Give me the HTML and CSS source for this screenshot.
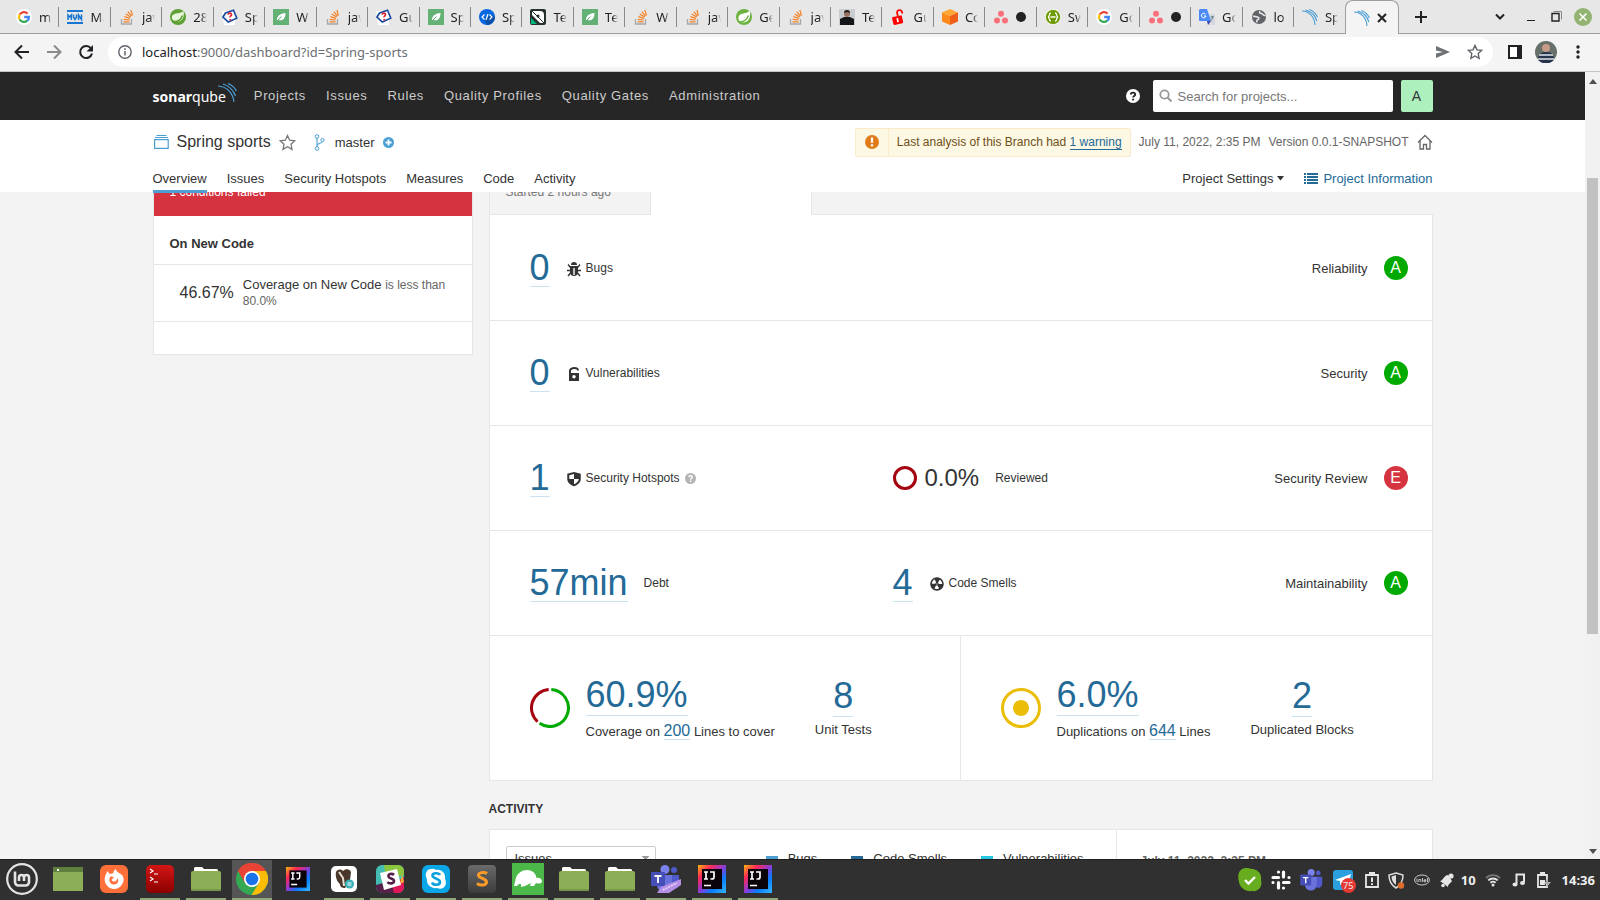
FILE: index.html
```html
<!DOCTYPE html>
<html lang="en">
<head>
<meta charset="utf-8">
<title>Spring sports</title>
<link rel="stylesheet" href="styles.css">
</head>
<body>
<svg class="defs" aria-hidden="true">
  <defs>
    <linearGradient id="g-ij" x1="0" y1="0" x2="1" y2="1"><stop offset="0" stop-color="#fdb60d"/><stop offset=".25" stop-color="#fe2857"/><stop offset=".5" stop-color="#8a3bd8"/><stop offset=".7" stop-color="#087cfa"/><stop offset="1" stop-color="#35b6ff"/></linearGradient>
    <linearGradient id="g-red" x1="0" y1="0" x2="0" y2="1"><stop offset="0" stop-color="#d31616"/><stop offset="1" stop-color="#8c0000"/></linearGradient>
    <linearGradient id="g-gray" x1="0" y1="0" x2="0" y2="1"><stop offset="0" stop-color="#6a6a6a"/><stop offset="1" stop-color="#3c3c3c"/></linearGradient>
  </defs>
  <symbol id="google" viewBox="0 0 16 16"><circle cx="8" cy="8" r="8" fill="#fff"/><g fill="none" stroke-width="2.3"><path d="M11.6 4.6A5 5 0 0 0 3.7 5.5" stroke="#ea4335"/><path d="M3.7 5.5a5 5 0 0 0 0 5" stroke="#fbbc05"/><path d="M3.7 10.5a5 5 0 0 0 7.6 1.2" stroke="#34a853"/><path d="M11.3 11.7A5 5 0 0 0 13 8H8.2" stroke="#4285f4"/></g></symbol>
  <symbol id="mvn" viewBox="0 0 16 16"><path d="M0 1h16v2H0zM0 13h16v2H0z" fill="#1976d2"/><path d="M1 11V6l1.700 2 1.700-2V11M6.500 5.500V8l1.500 2.500L9.500 8V5.500M11.500 11V6l3 4.500V5.500" fill="none" stroke="#1976d2" stroke-width="1.500"/></symbol>
  <symbol id="so" viewBox="0 0 16 16"><path d="M2.500 10v5h10v-5" fill="none" stroke="#a5a7aa" stroke-width="1.300"/><path d="M4.500 12.800h6M4.700 10.300l6 .7M5.400 7.600l5.600 1.800M6.700 4.900l5 3.200M8.800 2.600l3.700 4.500M11.800 1l1.700 5.500" stroke="#f48024" stroke-width="1.200"/></symbol>
  <symbol id="spring" viewBox="0 0 16 16"><circle cx="8" cy="8" r="8" fill="#6cb33e"/><path d="M13.800 1.800C10 5.500 2.200 3.200 2.400 9.500c.2 3.500 4 4.500 7 3.600 4.200-1.200 5.400-5.900 4.400-11.300z" fill="#fff"/><path d="M2.500 13.200c4 0 8.300-2 10-6.700" fill="none" stroke="#6cb33e" stroke-width="1.400"/></symbol>
  <symbol id="springdark" viewBox="0 0 16 16"><circle cx="8" cy="8" r="8" fill="#5fa134"/><path d="M13.500 2C10 5.500 1 3 2 9.300c.5 3.500 5 3.700 7.600 2.900C13 11 14.500 7 13.500 2z" fill="#e8f5df"/><path d="M2 12.500c5 .5 9-1.500 10.500-6" fill="none" stroke="#5fa134" stroke-width="1.500"/></symbol>
  <symbol id="jq" viewBox="0 0 16 16"><path d="M0 2h13v14H2z" fill="#fff"/><path d="M3.500 4l8-2.800 3.300 8-8.500 3.800L1 8z" fill="#fff" stroke="#17479e" stroke-width="1.600"/><path d="M6 5.600c.5-2 3.700-1.800 3.500.1-.1 1.300-1.600 1.200-1.500 2.700M8.200 10v1.400" stroke="#e32636" stroke-width="1.700" fill="none"/></symbol>
  <symbol id="bael" viewBox="0 0 16 16"><path d="M0 0h16v16H0z" fill="#63b175"/><path d="M4 12C3.500 7 7 4.500 12.500 4 12.500 9 10 12.500 5.500 11l3.300-3.500" fill="#fff"/><path d="M4 12l4.500-4.500" stroke="#63b175"/></symbol>
  <symbol id="code" viewBox="0 0 16 16"><circle cx="8" cy="8" r="8" fill="#0868e0"/><path d="M8 16a8 8 0 0 0 8-8l-3-2-8 4z" fill="#074fa8"/><path d="M5.500 5.500L3 8l2.500 2.500M10.500 5.500L13 8l-2.500 2.500M9 5L7 11" fill="none" stroke="#fff" stroke-width="1.200"/></symbol>
  <symbol id="tool" viewBox="0 0 16 16"><rect width="16" height="16" rx="2" fill="#25302f"/><path d="M2 2h8a4 4 0 0 1 4 4v8h-4L2 6z" fill="#fff"/><path d="M1 9l6 6H1z" fill="#00b980"/><path d="M2 2l12 12" stroke="#25302f"/><circle cx="8" cy="7" r="1.500" fill="#25302f"/></symbol>
  <symbol id="man" viewBox="0 0 16 16"><path d="M0 0h16v16H0z" fill="#c9cdd2"/><path d="M1 16V10l4-2h6l4 2v6z" fill="#15161a"/><circle cx="8" cy="5" r="3" fill="#9a7260"/><path d="M5 4a3 3 0 0 1 6 0l-3-1z" fill="#241a17"/></symbol>
  <symbol id="redlock" viewBox="0 0 16 16"><g transform="rotate(-12 8 8)"><rect x="2" y="7" width="10" height="8" rx="1" fill="#f00"/><path d="M8 7V4a2.500 2.500 0 0 1 5 0v1.500" fill="none" stroke="#f00" stroke-width="1.800"/><path d="M7 9v4" stroke="#fff" stroke-width="1.800"/></g></symbol>
  <symbol id="cube" viewBox="0 0 16 16"><path d="M8 0l8 3.500L8 7 0 3.500z" fill="#ffa733"/><path d="M0 3.500L8 7v9l-8-3.500z" fill="#ff8a1c"/><path d="M16 3.500L8 7v9l8-3.500z" fill="#ef5f17"/></symbol>
  <symbol id="asana" viewBox="0 0 16 16"><g fill="#f9707b"><circle cx="8" cy="4.800" r="3"/><circle cx="4" cy="11.500" r="3"/><circle cx="12" cy="11.500" r="3"/></g></symbol>
  <symbol id="swagger" viewBox="0 0 16 16"><circle cx="8" cy="8" r="7.600" fill="#6d9a00" stroke="#fff" stroke-width=".8"/><path d="M6 4c-3 0-.5 3.500-3 4 2.500.500 0 4 3 4M10 4c3 0 .5 3.500 3 4-2.500.500 0 4-3 4M5.500 8h5" fill="none" stroke="#fff" stroke-width="1.300"/></symbol>
  <symbol id="gtrans" viewBox="0 0 16 16"><path d="M7 5h9v11H9z" fill="#d5d8dc"/><path d="M8 12h4l-3 4z" fill="#3a45b5"/><path d="M1 0h7l4 12H1a1 1 0 0 1-1-1V1z" fill="#4c8bf5"/><path d="M6.600 5.200A2.300 2.300 0 1 0 7 7H5" fill="none" stroke="#fff" stroke-width="1"/><path d="M11.500 8H15M13.500 7c0 3-1 4-2 5" stroke="#607d8b" fill="none"/></symbol>
  <symbol id="globe" viewBox="0 0 16 16"><circle cx="8" cy="8" r="7" fill="#5f6368"/><path d="M2 7.500c2-.5 3 .3 5 .8 1.500.500 1 2-.5 2.500-.8.500-.5 1.500-1 2.500M9 2c-1 2 0 2.500 1.500 2.500s1.500 2.500 4 2" fill="none" stroke="#e8e8e8" stroke-width="1.600"/></symbol>
  <symbol id="waves" viewBox="0 0 16 16"><path d="M0 2c7 .2 12.500 5.500 13 14M3.500 1C9.500 2.500 13.500 6.500 14.800 12M7.500.5C11 2 14 4.500 15.500 8" fill="none" stroke="#4b9fd5" stroke-width="1.100"/></symbol>
  <symbol id="folder" viewBox="0 0 30 26"><path d="M3 5V2l1-1h7l2 2h13l1 1v3z" fill="#fff"/><rect y="5" width="30" height="20" rx="2" fill="#8cae57"/><path d="M0 23h30v1a1 1 0 0 1-1 1H1a1 1 0 0 1-1-1z" fill="#76964a"/></symbol>
  <symbol id="idea" viewBox="0 0 28 28"><path d="M0 0h28v28H0z" fill="url(#g-ij)"/><path d="M4 4h20v20H4z" fill="#090309"/><path d="M6 20.500h7M6 7h4M8 7v7M6 14h4M12 7h4v5c0 1.500-.5 2-2 2h-1.500" fill="none" stroke="#fff" stroke-width="1.700"/></symbol>
  <symbol id="teams" viewBox="0 0 30 28"><circle cx="23" cy="5" r="3" fill="#5059c9"/><circle cx="14" cy="4.500" r="4.500" fill="#7b83eb"/><path d="M18 10h10v9a5 5 0 0 1-8 4z" fill="#5059c9"/><path d="M6 10h15v10a7 7 0 0 1-15 0z" fill="#6a72dc"/><rect y="7" width="14" height="14" rx="1" fill="#464eb8"/><path d="M3.500 11h7M7 11v7" stroke="#fff" stroke-width="1.800"/></symbol>
  <symbol id="slack" viewBox="0 0 20 20"><g stroke="#fff" stroke-width="3.200" stroke-linecap="round"><path d="M7.500 2v0M12.500 2v5M2 7.500h5.500M18 7.500h0M2 12.500h0M12.500 12.500H18M7.500 12.500V18M12.500 18v0"/></g></symbol>
</svg>

<div class="browser">
  <header class="chrome">
    <div class="strip">
      <div class="tabs">
        <button class="tab"><svg><use href="#google"/></svg><span>ma</span></button>
        <button class="tab"><svg><use href="#mvn"/></svg><span>Ma</span></button>
        <button class="tab"><svg><use href="#so"/></svg><span>jav</span></button>
        <button class="tab"><svg><use href="#springdark"/></svg><span>28</span></button>
        <button class="tab"><svg><use href="#jq"/></svg><span>Sp</span></button>
        <button class="tab"><svg><use href="#bael"/></svg><span>W</span></button>
        <button class="tab"><svg><use href="#so"/></svg><span>jav</span></button>
        <button class="tab"><svg><use href="#jq"/></svg><span>Gu</span></button>
        <button class="tab"><svg><use href="#bael"/></svg><span>Sp</span></button>
        <button class="tab"><svg><use href="#code"/></svg><span>Sp</span></button>
        <button class="tab"><svg><use href="#tool"/></svg><span>Te</span></button>
        <button class="tab"><svg><use href="#bael"/></svg><span>Te</span></button>
        <button class="tab"><svg><use href="#so"/></svg><span>W</span></button>
        <button class="tab"><svg><use href="#so"/></svg><span>jav</span></button>
        <button class="tab"><svg><use href="#spring"/></svg><span>Ge</span></button>
        <button class="tab"><svg><use href="#so"/></svg><span>jav</span></button>
        <button class="tab"><svg><use href="#man"/></svg><span>Te</span></button>
        <button class="tab"><svg><use href="#redlock"/></svg><span>Gu</span></button>
        <button class="tab"><svg><use href="#cube"/></svg><span>Co</span></button>
        <button class="tab"><svg><use href="#asana"/></svg><i class="dot"></i></button>
        <button class="tab"><svg><use href="#swagger"/></svg><span>Sw</span></button>
        <button class="tab"><svg><use href="#google"/></svg><span>Go</span></button>
        <button class="tab"><svg><use href="#asana"/></svg><i class="dot"></i></button>
        <button class="tab"><svg><use href="#gtrans"/></svg><span>Go</span></button>
        <button class="tab"><svg><use href="#globe"/></svg><span>lo</span></button>
        <button class="tab last"><svg><use href="#waves"/></svg><span>Sp</span></button>
        <button class="tab active" aria-label="Close tab"><svg><use href="#waves"/></svg><svg viewBox="0 0 16 16"><path d="M1 4l8 8M9 4l-8 8" stroke="#222" stroke-width="2"/></svg></button>
      </div>
      <div class="window-tools">
        <button class="plus" aria-label="New tab"><svg width="12" height="12"><path d="M6 0v12M0 6h12" stroke="#222" stroke-width="2"/></svg></button>
        <button class="search-tabs" aria-label="Search tabs"><svg width="10" height="8"><path d="M1 1.500l4 4 4-4" fill="none" stroke="#222" stroke-width="2"/></svg></button>
        <button class="minimize" aria-label="Minimize"><svg width="8" height="10"><path d="M0 8.500h8" stroke="#222"/></svg></button>
        <button aria-label="Restore"><svg width="11" height="11"><path d="M2.500.5h8v8" fill="none" stroke="#888"/><path d="M1 2.500h7v7.500H1z" fill="none" stroke="#222" stroke-width="1.400"/></svg></button>
        <button aria-label="Close"><svg width="18" height="18"><circle cx="9" cy="9" r="9" fill="#92b372"/><path d="M5.500 5.500l7 7M12.500 5.500l-7 7" stroke="#fff" stroke-width="1.600"/></svg></button>
      </div>
    </div>
    <div class="toolbar">
      <button aria-label="Back"><svg width="16" height="16"><path d="M15 8H2M8 1.500L1.500 8 8 14.500" fill="none" stroke="#202124" stroke-width="2"/></svg></button>
      <button aria-label="Forward"><svg width="16" height="16"><path d="M1 8h13M8 1.500L14.500 8 8 14.500" fill="none" stroke="#8a8a8a" stroke-width="2"/></svg></button>
      <button aria-label="Reload"><svg width="16" height="16"><path d="M13 4.500A6 6 0 1 0 14 9.500" fill="none" stroke="#202124" stroke-width="2"/><path d="M15 1v6.500H8.500z" fill="#202124"/></svg></button>
      <div class="omnibox">
        <svg width="14" height="14"><circle cx="7" cy="7" r="6.200" fill="none" stroke="#5f6368" stroke-width="1.400"/><path d="M7 6v4.500M7 3.300v1.600" stroke="#5f6368" stroke-width="1.500"/></svg>
        <p class="url"><b>localhost</b>:9000/dashboard?id=Spring-sports</p>
        <svg width="16" height="14"><path d="M1 1l14 6-14 6V8.500L8 7 1 5.500z" fill="#6e7175"/></svg>
        <svg width="16" height="16"><path d="M8 1.500l2 4.400 4.600.5-3.400 3.200.9 4.700L8 12l-4.100 2.300.9-4.700L1.400 6.400 6 5.900z" fill="none" stroke="#5f6368" stroke-width="1.400"/></svg>
      </div>
      <button aria-label="Side panel"><svg width="14" height="14"><path d="M1 1h12v12H1z" fill="#fff" stroke="#202124" stroke-width="2"/><path d="M9 0h5v14H9z" fill="#202124"/></svg></button>
      <button class="profile" aria-label="Profile"><svg width="22" height="22"><circle cx="11" cy="11" r="11" fill="#68706a"/><path d="M3 19c0-6 3-8 8-8s8 2 8 8a11 11 0 0 1-16 0z" fill="#27344c"/><path d="M4 14h14M3 18h16" stroke="#dfe3ea" stroke-width="1.400"/><circle cx="11" cy="7" r="4" fill="#c69a86"/></svg></button>
      <button aria-label="Menu"><svg width="4" height="14" fill="#202124"><circle cx="2" cy="2" r="1.700"/><circle cx="2" cy="7" r="1.700"/><circle cx="2" cy="12" r="1.700"/></svg></button>
    </div>
  </header>

  <div class="view">
    <div class="page">
      <div class="topbar">
        <div class="wrap">
          <a class="logo" href="#"><b>sonar</b><span>qube</span><svg width="19" height="20" viewBox="0 0 19 20"><path d="M0 3c9 .5 15 7 16 16M5 1C11 3 15.500 7.500 17.500 13M10 .5C14 2 16.500 4.500 18.500 8" fill="none" stroke="#4b9fd5" stroke-width="1.200"/></svg></a>
          <nav class="mainnav"><a href="#">Projects</a><a href="#">Issues</a><a href="#">Rules</a><a href="#">Quality Profiles</a><a href="#">Quality Gates</a><a href="#">Administration</a></nav>
          <button class="help" aria-label="Help"><svg width="14" height="14"><circle cx="7" cy="7" r="7" fill="#fff"/><path d="M4.800 5.500C4.900 3 9.200 3 9.200 5.400 9.200 7 7.100 6.900 7.100 8.600M7.100 9.700v1.900" fill="none" stroke="#262626" stroke-width="1.900"/></svg></button>
          <label class="search"><svg width="14" height="14"><circle cx="5.500" cy="5.500" r="4.200" fill="none" stroke="#999" stroke-width="1.800"/><path d="M8.500 8.500l4 4" stroke="#999" stroke-width="2"/></svg><input type="text" placeholder="Search for projects..." aria-label="Search for projects"></label>
          <button class="user">A</button>
        </div>
      </div>

      <div class="project">
        <div class="wrap">
          <div class="projectline">
            <svg width="16" height="14"><path d="M1.600 4.700h13.600v8.600H1.600zM2 2.500h13M3.500.5h10" fill="none" stroke="#4b9fd5" stroke-width="1.200"/></svg>
            <h1>Spring sports</h1>
            <svg width="17" height="17"><path d="M8.500 1.500l2.200 4.700 5 .6-3.700 3.500 1 5.100-4.500-2.600L4 15.400l1-5.100L1.300 6.800l5-.6z" fill="none" stroke="#777" stroke-width="1.300"/></svg>
            <svg class="branch" width="11" height="17"><path d="M3 3.500v10M3 11.500C4 8.500 8 10 8.500 7.500" fill="none" stroke="#4b9fd5" stroke-width="1.100"/><g fill="#fff" stroke="#4b9fd5"><circle cx="3" cy="2.500" r="1.800"/><circle cx="3" cy="14.500" r="1.800"/><circle cx="8.500" cy="6" r="1.600"/></g></svg>
            <span class="master">master</span>
            <svg width="11" height="11"><circle cx="5.500" cy="5.500" r="5.500" fill="#4b9fd5"/><path d="M5.500 2.500v6M2.500 5.500h6" stroke="#fff" stroke-width="1.800"/></svg>
            <div class="alert">
              <span class="alerticon"><svg width="14" height="14"><circle cx="7" cy="7" r="7" fill="#e07b17"/><path d="M7 2.500v5.300M7 9.200v2.200" stroke="#fff" stroke-width="2.200"/></svg></span>
              <p>Last analysis of this Branch had <a href="#">1 warning</a></p>
            </div>
            <span class="meta">July 11, 2022, 2:35 PM</span>
            <span class="meta">Version 0.0.1-SNAPSHOT</span>
            <svg class="home" width="16" height="16"><path d="M1 8.500l7-7 7 7M3 7v8h3.500v-4.500h3V15H13V7" fill="none" stroke="#666" stroke-width="1.300"/></svg>
          </div>
          <div class="projectnav">
            <a class="on" href="#">Overview</a><a href="#">Issues</a><a href="#">Security Hotspots</a><a href="#">Measures</a><a href="#">Code</a><a href="#">Activity</a>
            <button class="settings">Project Settings<svg width="7" height="5"><path d="M0 0h7L3.500 4.500z" fill="#333"/></svg></button>
            <a class="info" href="#"><svg width="14" height="11"><path d="M0 1h2M3 1h11M0 4h2M3 4h11M0 7h2M3 7h11M0 10h2M3 10h11" stroke="#236a97" stroke-width="2"/></svg>Project Information</a>
          </div>
        </div>
      </div>

      <main class="content">
        <div class="wrap columns">
          <aside class="gate">
            <div class="failed">1 conditions failed</div>
            <h2>On New Code</h2>
            <div class="condition"><span class="value">46.67%</span><p>Coverage on New Code <small>is less than 80.0%</small></p></div>
            <div class="blank"></div>
          </aside>
          <section class="overview">
            <div class="periods"><button>Started 2 hours ago</button><button class="on" aria-label="Overall Code"></button></div>
            <div class="panel">
              <div class="row">
                <div class="cell"><a class="big" href="#">0</a><svg class="ic" viewBox="0 0 18 18"><path d="M6 5a3 3 0 0 1 6 0z"/><path d="M5 6h8v6c0 2.500-1.500 4-4 4s-4-1.500-4-4z"/><path d="M5.500 7.500L3 4.500M12.500 7.500L15 4.500M5 10.500H2M13 10.500h3M5.500 13L3 16M12.500 13l2.500 3" fill="none" stroke="#333" stroke-width="1.400"/><path d="M9 8v7" stroke="#fff" stroke-width="1.400"/></svg><span>Bugs</span></div>
                <div class="rating">Reliability<b class="a">A</b></div>
              </div>
              <div class="row">
                <div class="cell"><a class="big" href="#">0</a><svg class="ic" viewBox="0 0 18 18"><path d="M5 8.500V6c0-3.500 8-4.500 8-.5" fill="none" stroke="#333" stroke-width="2"/><path d="M4 8h10v8H4zM9 10a1.500 1.500 0 1 0 0 3.500A1.500 1.500 0 0 0 9 10z" fill-rule="evenodd"/></svg><span>Vulnerabilities</span></div>
                <div class="rating">Security<b class="a">A</b></div>
              </div>
              <div class="row">
                <div class="cell"><a class="big" href="#">1</a><svg class="ic" viewBox="0 0 16 16"><path d="M8 1.800l6 1.500V8c0 3-2.500 5.200-6 6.500C4.500 13.200 2 11 2 8V3.300z"/><path d="M8 3.600v4.400H3.800V4.600zM8 8h4.200c0 2-1.700 3.500-4.200 4.600z" fill="#fff"/></svg><span>Security Hotspots</span><svg class="q" width="11" height="11"><circle cx="5.500" cy="5.500" r="5.500" fill="#b4b4b4"/><path d="M3.800 4.300c.1-2 3.500-2 3.500 0 0 1.200-1.700 1.200-1.700 2.400M5.600 7.500v1.500" fill="none" stroke="#fff" stroke-width="1.400"/></svg></div>
                <div class="cell"><svg width="24" height="24"><circle cx="12" cy="12" r="10.500" fill="none" stroke="#a4030f" stroke-width="3"/></svg><span class="mid">0.0%</span><span>Reviewed</span></div>
                <div class="rating">Security Review<b class="e">E</b></div>
              </div>
              <div class="row">
                <div class="cell"><a class="big" href="#">57min</a><span class="solo">Debt</span></div>
                <div class="cell"><a class="big" href="#">4</a><svg class="ic" viewBox="0 0 16 16"><path d="M8 2C4.700 2 2 4.700 2 8s2.700 6 6 6 6-2.700 6-6-2.700-6-6-6zm-.5 5.500h.9v.9h-.9v-.9zm-3.800.2c-.1 0-.2-.1-.2-.2 0-.4.1-1.200.6-2S5.300 4.200 5.600 4c.2 0 .3 0 .3.100l1.300 2.300c0 .1 0 .2-.1.200-.1.200-.2.300-.3.500-.1.200-.2.400-.2.500 0 .1-.1.200-.2.200l-2.700-.1zM9.900 12c-.3.200-1.100.5-2 .5-.9 0-1.700-.3-2-.5-.1 0-.1-.2-.1-.3l1.300-2.300c0-.1.100-.1.200-.1.200.1.300.1.500.1s.4 0 .5-.1c.1 0 .2 0 .2.100l1.300 2.300c.2.200.2.300.1.300zm2.500-4.100L9.700 8c-.1 0-.2-.1-.2-.2 0-.2-.1-.4-.2-.5 0-.1-.2-.3-.3-.4-.1 0-.1-.1-.1-.2l1.300-2.300c.1-.1.200-.1.300-.1.300.2 1 .7 1.500 1.500s.6 1.600.6 2c0 0-.1.100-.2.100z"/></svg><span>Code Smells</span></div>
                <div class="rating">Maintainability<b class="a">A</b></div>
              </div>
              <div class="halves">
                <div class="half">
                  <svg width="40" height="40"><g fill="none" stroke-width="3"><path d="M21.300 1.500A18.500 18.500 0 1 1 9.600 35.300" stroke="#0a0"/><path d="M7.500 33.600A18.500 18.500 0 0 1 18.700 1.500" stroke="#a4030f"/></g></svg>
                  <div class="measure"><a class="big" href="#">60.9%</a><p>Coverage on <a href="#">200</a> Lines to cover</p></div>
                  <div class="count"><a class="big" href="#">8</a><p>Unit Tests</p></div>
                </div>
                <div class="half">
                  <svg width="40" height="40"><circle cx="20" cy="20" r="18.500" fill="none" stroke="#eabe06" stroke-width="3"/><circle cx="20" cy="20" r="8" fill="#eabe06"/></svg>
                  <div class="measure"><a class="big" href="#">6.0%</a><p>Duplications on <a href="#">644</a> Lines</p></div>
                  <div class="count"><a class="big" href="#">2</a><p>Duplicated Blocks</p></div>
                </div>
              </div>
            </div>
            <h3>ACTIVITY</h3>
            <div class="activity">
              <div class="graph">
                <select aria-label="Graph type"><option>Issues</option></select>
                <ul><li><i class="c1"></i>Bugs</li><li><i class="c2"></i>Code Smells</li><li><i class="c3"></i>Vulnerabilities</li></ul>
              </div>
              <div class="events">July 11, 2022, 2:35 PM</div>
            </div>
          </section>
        </div>
      </main>
    </div>
    <div class="scrollbar"><svg width="8" height="5"><path d="M0 5h8L4 0z" fill="#505050"/></svg><div class="track"><div class="thumb"></div></div><svg width="8" height="5"><path d="M0 0h8L4 5z" fill="#505050"/></svg></div>
  </div>

  <footer class="taskbar">
    <div class="apps">
      <button aria-label="Mint menu"><svg width="32" height="32"><circle cx="16" cy="16" r="14.800" fill="none" stroke="#e4e4e4" stroke-width="2.200"/><path d="M9 8.500V19a3.500 3.500 0 0 0 3.500 3.500h7A3.500 3.500 0 0 0 23 19v-4.500a2.500 2.500 0 0 0-5 0V18v-3.500a2.500 2.500 0 0 0-5 0V18" fill="none" stroke="#e4e4e4" stroke-width="2.600"/></svg></button>
      <button aria-label="Desktop"><svg width="30" height="26"><path d="M0 1h30v24H0z" fill="#8cae57"/><path d="M0 1h30v5H0z" fill="#5f7f3f"/><path d="M4 3h2v2H4z" fill="#fff"/></svg></button>
      <button aria-label="Firefox"><svg width="28" height="28"><rect width="28" height="28" rx="6" fill="#ff6f3a"/><path d="M14 24A9.500 9.500 0 0 1 5 12c.5-3 2-4 2-6l3 3c1-.5 2-.7 3-.5.5-2.500 2-4 3-4.500 0 3 4 4 6.500 6.500C26 16 21 24 14 24z" fill="#fff"/><path d="M10 12c2-1 3 0 4 1-3 .500-3 3-.5 3.500 2 .5 4-1 3.500-3.500 3 3 0 7-3.500 6.500C10 19 8.500 16 10 12z" fill="#ff6f3a"/></svg></button>
      <button class="run" aria-label="Terminal"><svg width="28" height="28"><rect width="28" height="28" rx="5" fill="url(#g-red)"/><path d="M4 4l3 2-3 2M8 9h4M4 12l3 2-3 2M8 17h4" fill="none" stroke="#fff" stroke-width="1.200"/></svg></button>
      <button class="run" aria-label="Files"><svg width="30" height="26"><use href="#folder"/></svg></button>
      <button class="run current" aria-label="Chrome"><svg width="32" height="32"><circle cx="16" cy="16" r="16" fill="#34a853"/><path d="M16 16L2.100 8A16 16 0 0 1 29.900 8z" fill="#ea4335"/><path d="M16 8h13.900A16 16 0 0 1 15.500 32L23 20z" fill="#fbbc05"/><path d="M2.100 8A16 16 0 0 1 16 0v9L9 20z" fill="#ea4335"/><circle cx="16" cy="16" r="8" fill="#fff"/><circle cx="16" cy="16" r="6.300" fill="#1a73e8"/></svg></button>
      <button aria-label="IntelliJ IDEA"><svg width="24" height="24" viewBox="0 0 28 28"><use href="#idea"/></svg></button>
      <button class="run" aria-label="DBeaver"><svg width="26" height="26"><rect width="26" height="26" rx="5" fill="#fff"/><path d="M5 6c2-3 5-3 7-1 3-3 7-2 8 1l-1 8-5 8c-3 0-5-1-5-4-3-2-5-8-4-12z" fill="#4a372c"/><path d="M8 6l4 6 1 8" fill="none" stroke="#e9dfd2" stroke-width="2"/><circle cx="18.500" cy="18" r="4.500" fill="#38b0b5"/><path d="M16.500 17h4M16.500 19h4" stroke="#fff"/></svg></button>
      <button class="run" aria-label="Slack"><svg width="28" height="28"><rect width="28" height="28" rx="6" fill="#44beb4"/><path d="M8 0h14a6 6 0 0 1 6 6v4L10 14z" fill="#8cc63f"/><path d="M0 20l14-4 6 12H6a6 6 0 0 1-6-6z" fill="#56204b"/><path d="M16 20l12-8v10a6 6 0 0 1-6 6h-4z" fill="#e0155a"/><path d="M26 9l2 8-4 2z" fill="#ecb22e"/><path d="M4 8l17-4 4 16-17 5z" fill="#fff"/><path d="M18 10c-2-2-6-1-5.500 1.500S18 13 18 16s-5 3-6.500 1" fill="none" stroke="#56204b" stroke-width="2.600"/></svg></button>
      <button class="run" aria-label="Skype"><svg width="28" height="28"><rect width="28" height="28" rx="6" fill="#0aa7e6"/><path d="M9 4a6 6 0 0 1 5 1c6-1 10 4 9 9 3 6-2 12-8 9-6 1-11-4-10-9C2 9 5 4 9 4z" fill="#fff"/><path d="M18 10c-1-2.500-8-2.500-7.500.7S18 13.500 18 17s-7 3.500-8 .5" fill="none" stroke="#0aa0dd" stroke-width="2.600"/></svg></button>
      <button class="run" aria-label="Sublime Text"><svg width="28" height="28"><rect width="28" height="28" rx="4" fill="url(#g-gray)"/><path d="M19 8.500c-3-2-9-1-8.500 2s8 3 8 6.500-6 4-9.500 1.500" fill="none" stroke="#ff9b26" stroke-width="3"/></svg></button>
      <button class="run" aria-label="Turtle"><svg width="32" height="32"><path d="M0 0h32v32H0z" fill="#4bb849"/><path d="M3 19C4 10 10 7 15 7c6 0 9 4 9.500 8 3-1 5 1 5.500 3 0 3-4 3-6 2l-2 3h-4l1-3-6 3-4 1v-3H7l-2 2H2z" fill="#fff"/></svg></button>
      <button class="run" aria-label="Files"><svg width="30" height="26"><use href="#folder"/></svg></button>
      <button class="run" aria-label="Files"><svg width="30" height="26"><use href="#folder"/></svg></button>
      <button class="run" aria-label="Teams"><svg width="30" height="28"><use href="#teams"/><path d="M6 28l4-6 20-8v6l-12 8z" fill="#b58ee6"/><path d="M12 25l14-7" stroke="#e9dcfa" stroke-width="1.600" stroke-dasharray="2 1"/></svg></button>
      <button class="run" aria-label="IntelliJ IDEA"><svg width="28" height="28"><use href="#idea"/></svg></button>
      <button class="run" aria-label="IntelliJ IDEA"><svg width="28" height="28"><use href="#idea"/></svg></button>
    </div>
    <div class="tray">
      <svg width="24" height="24"><path d="M7 0c3 0 5 .5 8 1 6 1 9 6 8 11 2 7-3 12-9 11-6 1-12-3-13-9-2-7 0-13 6-14z" fill="#68ad1f"/><path d="M7 12l3.500 3.500L17 9" fill="none" stroke="#fff" stroke-width="2.400"/></svg>
      <svg width="20" height="20"><use href="#slack"/></svg>
      <svg width="24" height="22"><use href="#teams"/></svg>
      <span class="telegram"><svg width="20" height="20"><rect width="20" height="20" rx="3" fill="#2aa1de"/><path d="M2 10l16-6-3 12-5-4-3 3v-4z" fill="#fff"/></svg><em>75</em></span>
      <svg width="14" height="16"><path d="M1 3h12v12H1z" fill="none" stroke="#e6e6e6" stroke-width="1.800"/><path d="M4 0h6v3H4z" fill="#e6e6e6"/><path d="M7 5.500v4.500M7 11.200v1.800" stroke="#e6e6e6" stroke-width="2"/></svg>
      <svg width="17" height="17"><path d="M8 1l7 2c0 6-2 10-7 13C3 13 1 9 1 3z" fill="none" stroke="#ddd" stroke-width="1.500"/><path d="M8 3v10c-3-2-4.500-5-4.500-8.500z" fill="#ddd"/><circle cx="13" cy="13.500" r="3.200" fill="#dd6b2a"/></svg>
      <svg width="16" height="12"><ellipse cx="8" cy="6" rx="7.400" ry="5" fill="none" stroke="#ccc"/><path d="M3 4.500v3.500M4.800 8V5.500h2V8M8.500 4v4M10 6.800h2v-1h-2v2h2M13.500 4v4" fill="none" stroke="#ccc" stroke-width=".9"/></svg>
      <svg width="15" height="15"><path d="M1 8C4 8 5 2 9 2l4 6c-1 2-4 3-4 6z" fill="#e6e6e6"/><circle cx="4" cy="12.500" r="1.800" fill="#e6e6e6"/><circle cx="12" cy="3" r="2.600" fill="#e6e6e6"/></svg>
      <span class="ten">10</span>
      <svg width="16" height="14"><g fill="none" stroke-width="1.800"><path d="M1 5a10 10 0 0 1 14 0" stroke="#777"/><path d="M3.200 7.400a7 7 0 0 1 9.600 0M5.400 9.800a4 4 0 0 1 5.200 0" stroke="#e6e6e6"/></g><circle cx="8" cy="12" r="1.500" fill="#e6e6e6"/></svg>
      <svg class="far" width="14" height="14"><path d="M4.500 11V1.500H12V9" fill="none" stroke="#e6e6e6" stroke-width="2"/><ellipse cx="3" cy="11.500" rx="2.500" ry="2" fill="#e6e6e6"/><ellipse cx="10.500" cy="10" rx="2.500" ry="2" fill="#e6e6e6"/></svg>
      <svg class="far" width="14" height="16"><path d="M1 3h9v12H1z" fill="none" stroke="#e6e6e6" stroke-width="1.800"/><path d="M3 0h5v3H3zM3 8h5v5H3z" fill="#e6e6e6"/><path d="M11 6l-4 6h3l-1 4 5-6h-3z" fill="#aaa"/></svg>
      <time>14:36</time>
    </div>
  </footer>
</div>
</body>
</html>
```
FILE: styles.css
```css
* { box-sizing: border-box; }
body, h1, h2, h3, p, ul { margin: 0; padding: 0; }
body { font-family: "Liberation Sans", Arial, sans-serif; font-size: 13px; color: #333; overflow: hidden; }
button { border: 0; padding: 0; background: none; font: inherit; color: inherit; }
a { color: inherit; text-decoration: none; }
svg { flex: none; display: block; }
.defs { position: absolute; width: 0; height: 0; }
.browser { height: 100vh; display: flex; flex-direction: column; }

/* browser frame */
.chrome { flex: none; border-bottom: 1px solid #c4c4c4; font-family: "Noto Sans", sans-serif; }
.strip { display: flex; height: 34px; background: #e7e7e7; }
.tabs { flex: 1; min-width: 0; display: flex; padding-left: 8px; border-bottom: 1px solid #9f9f9f; }
.tab { flex: 1 1 0; min-width: 0; display: flex; align-items: center; gap: 7px; padding: 1px 7px 0 8px; background: linear-gradient(#8a8a8a, #8a8a8a) right 7px / 1px 20px no-repeat; font-size: 13px; color: #222; }
.tab svg { width: 16px; height: 16px; }
.tab span { flex: 1; min-width: 0; overflow: hidden; white-space: nowrap; text-align: left; mask-image: linear-gradient(90deg, #000 60%, transparent); }
.tab .dot { width: 10px; height: 10px; border-radius: 50%; background: #222; }
.tab.last { background: none; }
.tab.active { background: #f4f4f4; border: 1px solid #9f9f9f; border-bottom: 0; border-radius: 8px 8px 0 0; height: 34px; }
.window-tools { flex: none; width: 201px; display: flex; align-items: center; gap: 12px; padding-right: 8px; border-bottom: 1px solid #9f9f9f; }
.plus { margin-right: auto; padding-left: 16px; }
.search-tabs { margin-right: 10px; }
.minimize { margin-right: 4px; }
.toolbar { display: flex; align-items: center; gap: 16px; height: 37px; padding: 0 20px 2px 14px; background: #f4f4f4; }
.omnibox { flex: 1; display: flex; align-items: center; gap: 10px; height: 30px; margin-left: -2px; margin-right: -1px; padding: 0 10px; border-radius: 15px; background: #fff; }
.omnibox svg + svg { margin-left: 6px; }
.url { flex: 1; font-size: 13px; color: #6c6f73; }
.url b { font-weight: 400; color: #202124; }
.profile { margin: 0 3px 0 -3px; }

/* viewport */
.view { flex: 1; min-height: 0; display: flex; }
.page { flex: 1; min-width: 0; display: flex; flex-direction: column; background: #f3f3f3; }
.scrollbar { width: 15px; display: flex; flex-direction: column; align-items: center; padding: 7px 0 5px; background: #f1f1f1; }
.track { flex: 1; align-self: stretch; padding: 94px 2px 0; }
.thumb { height: 68%; background: #c1c1c1; }
.wrap { width: 100%; max-width: 1280px; margin: 0 auto; }

.topbar { flex: none; background: #262626; }
.topbar .wrap { display: flex; align-items: center; height: 48px; }
.logo { display: flex; align-items: center; font-family: "Noto Sans", sans-serif; font-size: 14px; color: #fff; }
.logo svg { margin: 0 0 6px -8px; }
.mainnav { flex: 1; display: flex; gap: 20px; margin-left: 17px; padding-bottom: 2px; letter-spacing: .05em; color: #ccc; }
.help { margin-right: 13px; }
.search { display: flex; align-items: center; gap: 5px; width: 240px; height: 32px; padding-left: 6px; border-radius: 2px; background: #fff; }
.search input { flex: 1; min-width: 0; border: 0; outline: 0; padding: 0; font: inherit; }
.search input::placeholder { color: #777; }
.user { width: 32px; height: 32px; margin-left: 8px; border-radius: 2px; background: #aef0bd; font-size: 14px; }

.project { flex: none; background: #fff; position: relative; z-index: 1; }
.projectline { display: flex; align-items: center; gap: 8px; height: 44px; }
.projectline h1 { font-size: 16px; line-height: 20px; font-weight: 400; }
.projectline .branch { margin-left: 10px; }
.projectline .master { margin-left: 2px; }
.alert { display: flex; align-items: stretch; height: 29px; margin-left: auto; border: 1px solid #faebcc; border-radius: 2px; background: #fcf8e3; color: #6f4f17; font-size: 12px; }
.alerticon { display: flex; align-items: center; padding: 0 9px; border-right: 1px solid #faebcc; }
.alert p { align-self: center; padding: 0 8px; }
.alert a { color: #236a97; border-bottom: 1px solid #236a97; }
.meta { font-size: 12px; color: #666; }
.projectnav { display: flex; gap: 20px; height: 28px; line-height: 15px; padding-top: 7px; }
.projectnav a { height: 22px; }
.projectnav .on { border-bottom: 3px solid #4b9fd5; }
.settings, .info { display: flex; align-items: center; }
.settings { margin-left: auto; height: 15px; gap: 4px; }
.projectnav .info { height: 15px; gap: 5px; color: #236a97; }

/* dashboard, scrolled part way down */
.content { flex: 1; min-height: 0; overflow: hidden; }
.columns { display: flex; align-items: flex-start; gap: 16px; margin-top: -20px; }
.gate { width: 25%; border: 1px solid #e6e6e6; background: #fff; }
.failed { height: 43px; padding: 11px 16px; background: #d4333f; color: #fff; font-size: 12px; line-height: 16px; }
.gate h2 { padding: 20px 16px 12px; font-size: 13px; line-height: 16px; }
.condition { display: flex; align-items: center; gap: 9px; height: 58px; padding: 0 20px 0 26px; border: solid #e6e6e6; border-width: 1px 0; }
.condition .value { font-size: 16px; }
.condition p { line-height: 16px; }
.condition small { font-size: 12px; color: #666; }
.blank { height: 32px; }
.overview { flex: 1; min-width: 0; }
.periods { position: relative; display: flex; height: 43px; border-left: 1px solid #e6e6e6; }
.periods button { width: 161px; padding: 0 0 4px 16px; text-align: left; font-size: 12px; color: #777; border-right: 1px solid #e6e6e6; }
.periods .on { background: #fff; }
.panel { margin-top: -1px; padding-top: 1px; border: 1px solid #e6e6e6; background: #fff; }
.row { display: grid; grid-template-columns: 363px 1fr auto; align-items: center; height: 105px; padding: 0 24px 0 40px; border-bottom: 1px solid #e6e6e6; }
.cell { display: flex; align-items: center; font-size: 12px; }
.big { font-size: 36px; line-height: 36px; color: #236a97; border-bottom: 1px solid #cae3f2; }
.ic { width: 18px; height: 18px; margin: 2px 3px 0 15px; fill: #333; }
.q { margin-left: 5px; }
.mid { margin: 0 16px 0 8px; font-size: 24px; }
.solo { margin-left: 16px; }
.rating { grid-column: 3; display: flex; align-items: center; gap: 16px; }
.rating b { width: 24px; height: 24px; border-radius: 50%; color: #fff; font-size: 16px; font-weight: 400; line-height: 24px; text-align: center; }
.a { background: #0a0; }
.e { background: #d4333f; }
.halves { display: grid; grid-template-columns: 1fr 1fr; }
.half { display: flex; align-items: center; height: 144px; padding: 0 40px; }
.half:first-child { border-right: 1px solid #e6e6e6; }
.measure { margin-left: 16px; }
.measure .big, .count .big { display: inline-block; line-height: 40px; }
.measure p { margin-top: 5px; line-height: 20px; }
.measure p a { font-size: 16px; color: #236a97; border-bottom: 1px solid #cae3f2; }
.count { margin-left: 40px; text-align: center; }
.count p { margin-top: 3px; line-height: 20px; }
.overview h3 { margin: 21px 0 12px; font-size: 12px; line-height: 15px; }
.activity { display: flex; border: 1px solid #e6e6e6; background: #fff; height: 240px; }
.graph { flex: 1; display: flex; justify-content: space-between; align-items: flex-start; padding: 16px 32px 16px 16px; }
.graph select { width: 150px; height: 24px; padding-left: 8px; border: 1px solid #ccc; border-radius: 2px; font: inherit; color: #333; appearance: none; background: linear-gradient(45deg, transparent 50%, #999 50%) 135px 9px / 4px 4px no-repeat, linear-gradient(315deg, transparent 50%, #999 50%) 139px 9px / 4px 4px no-repeat, #fff; }
.graph ul { display: flex; gap: 34px; list-style: none; padding-top: 5px; }
.graph li { display: flex; align-items: center; gap: 10px; line-height: 15px; }
.graph i { width: 12px; height: 5px; background: #4b9fd5; }
.graph .c2 { background: #236a97; }
.graph .c3 { background: #24c6e0; }
.events { width: 316px; padding: 24px; border-left: 1px solid #e6e6e6; font-size: 12px; font-weight: 700; color: #666; }

/* desktop panel */
.taskbar { flex: none; display: flex; justify-content: space-between; height: 41px; background: #303030; border-top: 1px solid #1f1f1f; font-family: "Noto Sans", sans-serif; color: #eee; }
.apps { display: flex; gap: 6px; padding-left: 2px; }
.apps button { width: 40px; display: flex; align-items: center; justify-content: center; border-bottom: 2px solid transparent; }
.apps .run { border-bottom-color: #8fa876; }
.apps .current { background: #555; }
.tray { display: flex; align-items: center; gap: 9px; padding-right: 5px; font-size: 13px; font-weight: 700; }
.tray time { margin-left: 2px; }
.telegram { position: relative; margin-right: 3px; }
.telegram em { position: absolute; right: -3px; bottom: -3px; width: 15px; height: 15px; border-radius: 50%; background: #e53935; font-size: 9px; font-style: normal; font-weight: 400; line-height: 15px; text-align: center; }
.ten { margin-left: -2px; }
.far { margin-left: 2px; }
```
